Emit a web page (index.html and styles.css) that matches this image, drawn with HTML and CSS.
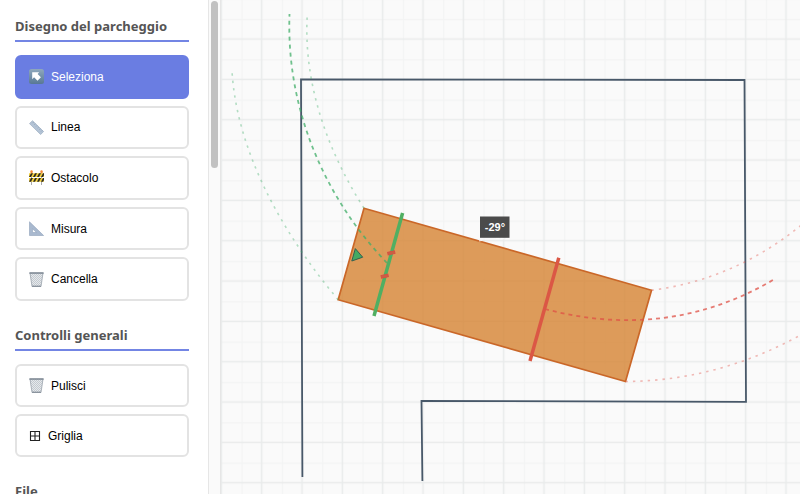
FILE: index.html
```html
<!DOCTYPE html>
<html lang="it">
<head>
<meta charset="utf-8">
<title>Parcheggio</title>
<link rel="stylesheet" href="styles.css">
</head>
<body>
<svg class="defs" aria-hidden="true">
  <defs>
    <linearGradient id="metal" x1="0" y1="0" x2="0" y2="1">
      <stop offset="0" stop-color="#8fa8bd"/><stop offset="1" stop-color="#587894"/>
    </linearGradient>
    <pattern id="mesh" width="2" height="2" patternUnits="userSpaceOnUse">
      <rect width="2" height="2" fill="#c3c9cf"/><path d="M0 0h1v1H0zM1 1h1v1H1z" fill="#e6e9ec"/>
    </pattern>
    <symbol id="bin" viewBox="0 0 15 15">
      <path d="M1 1h13l-2 13.5H3z" fill="url(#mesh)" stroke="#98a1ab" stroke-width=".8"/>
      <path d="M.3 1h14.4" stroke="#76818d" stroke-width="1.3"/>
      <path d="M3 14.2h9" stroke="#7f8993"/>
    </symbol>
  </defs>
</svg>
<div class="app">
  <aside class="sidebar">
    <section class="group">
      <h3 class="group-title">Disegno del parcheggio</h3>
      <div class="tools tools-draw">
        <button class="tool active" type="button">
          <svg class="icon" viewBox="0 0 15 15" aria-hidden="true"><rect width="15" height="15" rx="2.5" fill="url(#metal)"/><path d="M3.2 3.2h7L8.6 4.9l3.3 3.4-3.4 3.4-3.4-3.4-1.9 1.9z" fill="#fff"/></svg>
          Seleziona</button>
        <button class="tool" type="button">
          <svg class="icon" viewBox="0 0 15 15" aria-hidden="true"><path d="M3.5.7 14.6 11.6 11.6 14.5.5 3.6z" fill="#b4c4d6" stroke="#8fa2b8" stroke-width=".6"/><path d="m4.7 2-1.2 1.2M6.4 3.7 5.2 4.9M8.1 5.4 6.9 6.6M9.8 7 8.6 8.2M11.5 8.7l-1.2 1.2M13.2 10.4 12 11.6" stroke="#8093a9" stroke-width=".5"/></svg>
          Linea</button>
        <button class="tool" type="button">
          <svg class="icon" viewBox="0 0 15 15" aria-hidden="true"><path d="M2.5 3v12M12.5 3v12" stroke="#a9aaad"/><path d="M0 3.2h15v3.9H0zM0 7.9h15v3.9H0z" fill="#f2cf3c"/><path d="m0 7 2-3.8h2L2 7.1zM4 7.1l2-3.9h2L6 7.1zM8 7.1l2-3.9h2l-2 3.9zM12 7.1l2-3.9h1v2l-1 1.9zM0 11.8l2-3.9h2l-2 3.9zM4 11.8l2-3.9h2l-2 3.9zM8 11.8l2-3.9h2l-2 3.9zM12 11.8l2-3.9h1v2l-1 1.9z" fill="#2d2b22"/><rect x="1.4" y=".3" width="2.3" height="3" rx="1" fill="#f58a38"/><rect x="11.4" y=".3" width="2.3" height="3" rx="1" fill="#f58a38"/></svg>
          Ostacolo</button>
        <button class="tool" type="button">
          <svg class="icon" viewBox="0 0 15 15" aria-hidden="true"><path d="M.5.8 14.6 14.5H.5zM3.6 7.8v3.7h3.8z" fill="#a9b9cf" fill-rule="evenodd" stroke="#8ea1ba" stroke-width=".6"/></svg>
          Misura</button>
        <button class="tool" type="button">
          <svg class="icon" aria-hidden="true"><use href="#bin"/></svg>
          Cancella</button>
      </div>
    </section>
    <section class="group">
      <h3 class="group-title">Controlli generali</h3>
      <div class="tools">
        <button class="tool" type="button">
          <svg class="icon" aria-hidden="true"><use href="#bin"/></svg>
          Pulisci</button>
        <button class="tool" type="button">
          <svg class="icon icon-small" viewBox="0 0 12 12" aria-hidden="true"><path d="M1.5 1.5h9v9h-9zM6 1.5v9M1.5 6h9" fill="none" stroke="#222" stroke-width="1.1"/></svg>
          Griglia</button>
      </div>
    </section>
    <section class="group">
      <h3 class="group-title">File</h3>
    </section>
  </aside>
  <div class="scroll-track"><div class="scroll-thumb"></div></div>
  <main class="board">
    <svg class="drawing" viewBox="221 0 579 494" preserveAspectRatio="xMinYMin slice" role="img" aria-label="Piano di parcheggio">
      <defs>
        <pattern id="grid" width="40" height="40" patternUnits="userSpaceOnUse" patternTransform="translate(201.2 18.9) scale(1.0083)">
          <path d="M0 0v40M0 0h40" stroke="#f3f4f4" stroke-width="2.4"/>
          <path d="M20 0v40M0 20h40" stroke="#e9ebeb" stroke-width="1.5"/>
        </pattern>
      </defs>
      <rect x="221" width="2000" height="2000" fill="url(#grid)"/>
      <path class="wall" d="M302.4 477 301 79.3 744.5 80 746 401.8 421.5 401 422.4 481"/>
      <path class="car" d="M364 208.2 651.5 290.3 625.5 381.5 338.2 299.7z"/>
      <g class="trail green">
        <path class="edge" d="M364 208.2C328 152 303 84 307.3 14"/>
        <path class="edge" d="M338.2 299.7C287 239 237 156 232 71"/>
        <path d="M387 263C325 198 286 110 289.5 14"/>
      </g>
      <g class="trail red">
        <path class="edge" d="M651.5 290.3C708 283 760 260 805 222"/>
        <path class="edge" d="M625.5 381.5C690 381 750 364 806 332"/>
        <path d="M545 309C627 331 705 320 773 280"/>
      </g>
      <path class="axle front" d="M402.6 213 374 316"/>
      <path class="axle rear" d="M558.8 257.8 530 361"/>
      <g class="wheel">
        <rect x="-3.5" y="-1.3" width="7" height="2.6" transform="translate(391.3 252.8) rotate(-13)"/>
        <rect x="-3.5" y="-1.3" width="7" height="2.6" transform="translate(384.7 276.2) rotate(-13)"/>
      </g>
      <path class="heading" d="m355.3 248.6 7.4 8.6-10.9 3.8z"/>
      <path class="ticks" d="m479 240.8 5-.6m12-1.7h14"/>
      <rect class="badge" x="480" y="216.5" width="29.5" height="21.3"/>
      <text class="badge-text" x="495" y="230.5">-29°</text>
    </svg>
  </main>
</div>
</body>
</html>
```

FILE: styles.css
```css
* { box-sizing: border-box; }

body {
  margin: 0;
  background: #fff;
  font-family: "Noto Sans", sans-serif;
}

.defs { position: absolute; width: 0; height: 0; }

.app {
  display: flex;
  height: 100vh;
  overflow: hidden;
}

.sidebar {
  flex: 0 0 208px;
  padding: 18px 19px 0 15px;
  overflow: hidden;
}

.group { margin-bottom: 26px; }

.group-title {
  margin: 0 0 13px;
  padding-bottom: 6px;
  border-bottom: 2px solid #7385e4;
  color: #555;
  font-size: 13px;
  font-weight: 700;
  line-height: 16px;
  white-space: nowrap;
}

.tools {
  display: grid;
  grid-auto-rows: 1fr;
  gap: 7px;
}

.tools-draw { min-height: 246px; }

.tool {
  display: flex;
  align-items: center;
  gap: 7px;
  min-height: 43px;
  padding: 0 12px;
  border: 2px solid #e3e3e3;
  border-radius: 6px;
  background: #fff;
  color: #000;
  font-family: "Liberation Sans", Arial, sans-serif;
  font-size: 12px;
  text-align: left;
}

.tool.active {
  border-color: #6a7de2;
  background: #6a7de2;
  color: #fff;
}

.icon { width: 15px; height: 15px; flex: none; }
.icon-small { width: 12px; height: 12px; }

.scroll-track {
  flex: 0 0 13px;
  padding: 1px 2px;
  border: solid #e6e6e6;
  border-width: 0 1px;
  background: #fafafa;
}

.scroll-thumb {
  height: 34%;
  border-radius: 4px;
  background: #c1c1c1;
}

.board {
  flex: 1;
  min-width: 0;
  background: #fafafa;
}

.drawing { display: block; width: 100%; height: 100%; }
.drawing path { fill: none; }

.drawing .wall { stroke: #485869; stroke-width: 1.8; }
.drawing .car { fill: #d68332; fill-opacity: .8; stroke: #ca6728; stroke-width: 1.7; }

.trail path { stroke-width: 1.8; stroke-dasharray: 4 4; opacity: .75; }
.trail .edge { stroke-width: 1.6; stroke-dasharray: 2.4 5; opacity: .38; }
.green path { stroke: #40ae68; }
.red path { stroke: #df5045; }

.axle { stroke-width: 3.5; }
.front { stroke: #50af62; }
.rear { stroke: #db5745; }

.wheel { fill: #ca6142; stroke: #d84f43; stroke-width: 1; }
.drawing .heading { fill: #43aa62; stroke: #365e50; stroke-width: 1; }
.drawing .ticks { stroke: #fff; stroke-width: 1.3; stroke-dasharray: 3 2; opacity: .7; }

.badge { fill: #4b4b4b; }
.badge-text {
  fill: #fff;
  font: bold 11px "Liberation Sans", Arial, sans-serif;
  text-anchor: middle;
}
```
